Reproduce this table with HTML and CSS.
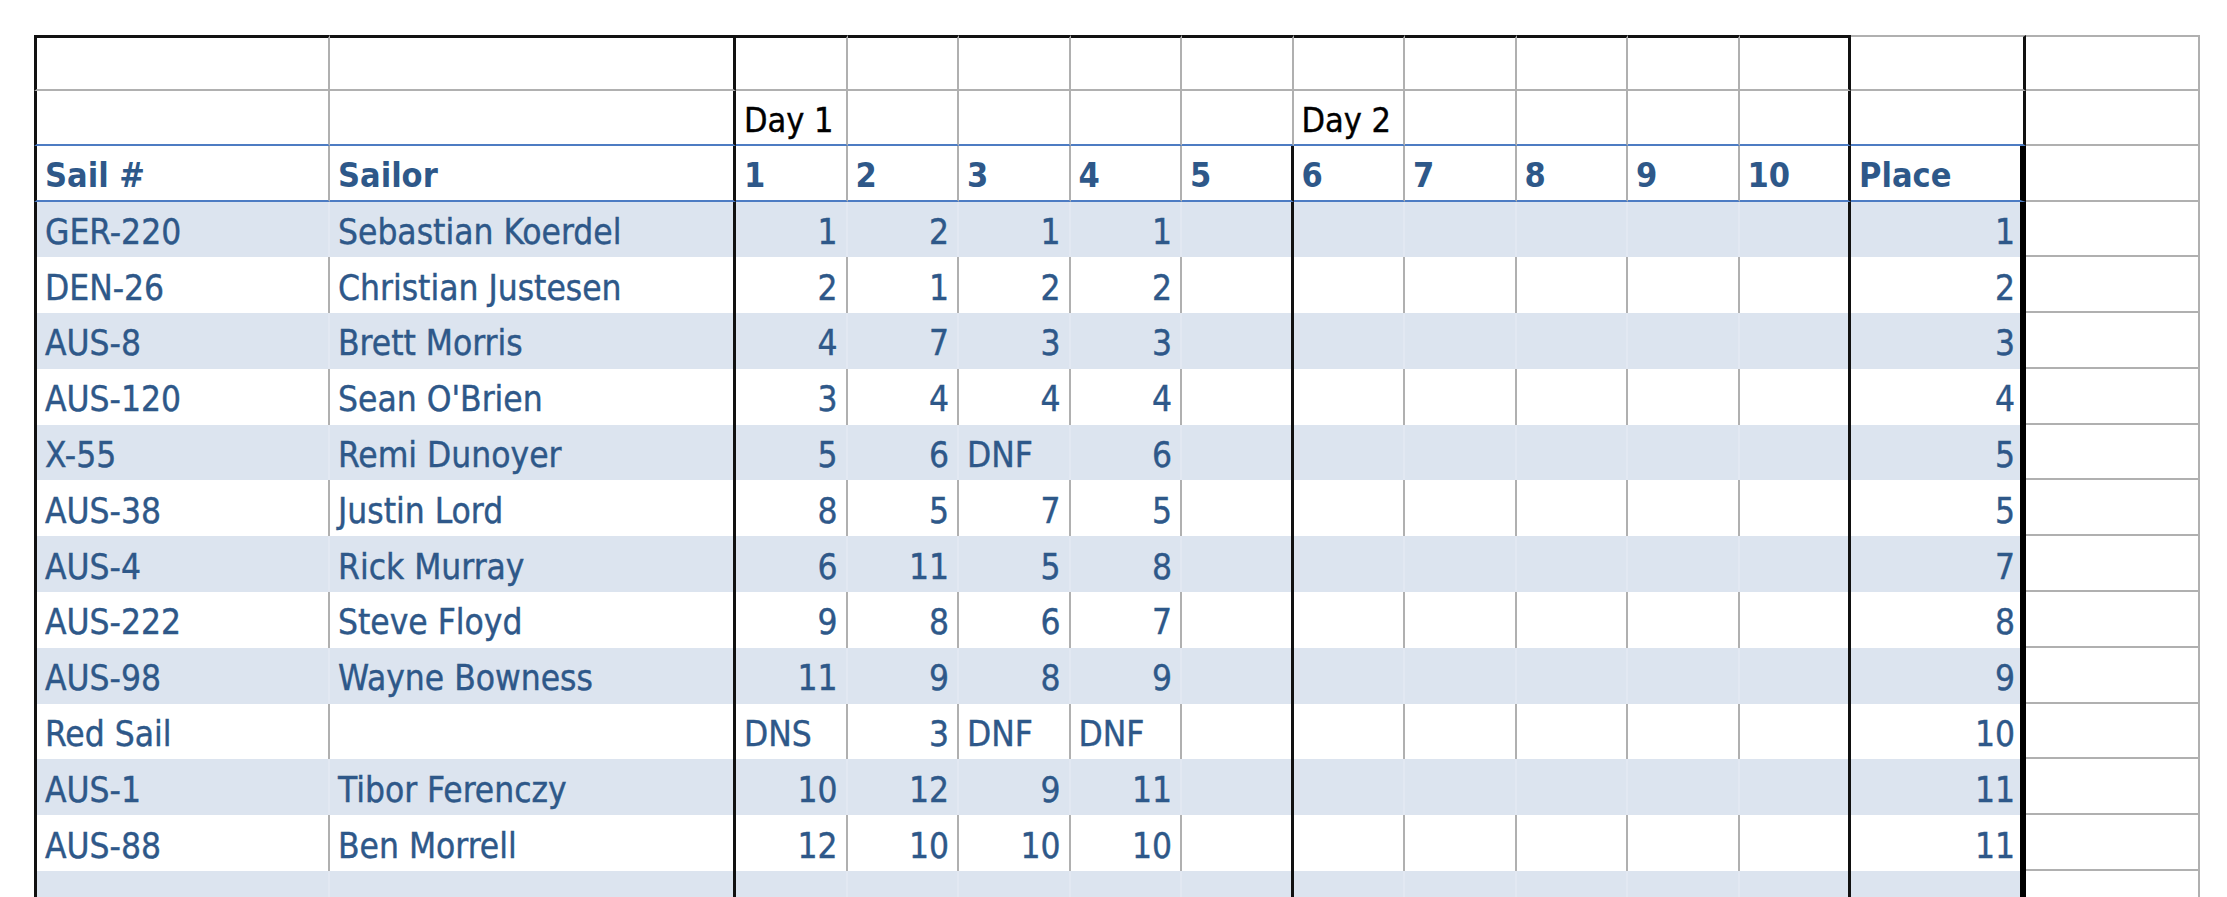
FILE: index.html
```html
<!DOCTYPE html>
<html>
<head>
<meta charset="utf-8">
<title>Results</title>
<link rel="stylesheet" href="styles.css">
</head>
<body>
<div class="sheet">
  <div class="row top head">
    <div class="c"></div><div class="c"></div><div class="c"></div><div class="c"></div><div class="c"></div><div class="c"></div><div class="c"></div><div class="c"></div><div class="c"></div><div class="c"></div><div class="c"></div><div class="c"></div><div class="c"></div><div class="c"></div>
  </div>
  <div class="row head head2">
    <div class="c"></div><div class="c"></div><div class="c day">Day 1</div><div class="c"></div><div class="c"></div><div class="c"></div><div class="c"></div><div class="c day">Day 2</div><div class="c"></div><div class="c"></div><div class="c"></div><div class="c"></div><div class="c"></div><div class="c"></div>
  </div>
  <div class="row cols">
    <div class="c">Sail #</div><div class="c">Sailor</div><div class="c">1</div><div class="c">2</div><div class="c">3</div><div class="c">4</div><div class="c">5</div><div class="c">6</div><div class="c">7</div><div class="c">8</div><div class="c">9</div><div class="c">10</div><div class="c">Place</div><div class="c"></div>
  </div>
  <div class="row data band">
    <div class="c">GER-220</div><div class="c">Sebastian Koerdel</div><div class="c num">1</div><div class="c num">2</div><div class="c num">1</div><div class="c num">1</div><div class="c"></div><div class="c"></div><div class="c"></div><div class="c"></div><div class="c"></div><div class="c"></div><div class="c num place">1</div><div class="c"></div>
  </div>
  <div class="row data">
    <div class="c">DEN-26</div><div class="c">Christian Justesen</div><div class="c num">2</div><div class="c num">1</div><div class="c num">2</div><div class="c num">2</div><div class="c"></div><div class="c"></div><div class="c"></div><div class="c"></div><div class="c"></div><div class="c"></div><div class="c num place">2</div><div class="c"></div>
  </div>
  <div class="row data band">
    <div class="c">AUS-8</div><div class="c">Brett Morris</div><div class="c num">4</div><div class="c num">7</div><div class="c num">3</div><div class="c num">3</div><div class="c"></div><div class="c"></div><div class="c"></div><div class="c"></div><div class="c"></div><div class="c"></div><div class="c num place">3</div><div class="c"></div>
  </div>
  <div class="row data">
    <div class="c">AUS-120</div><div class="c">Sean O'Brien</div><div class="c num">3</div><div class="c num">4</div><div class="c num">4</div><div class="c num">4</div><div class="c"></div><div class="c"></div><div class="c"></div><div class="c"></div><div class="c"></div><div class="c"></div><div class="c num place">4</div><div class="c"></div>
  </div>
  <div class="row data band">
    <div class="c">X-55</div><div class="c">Remi Dunoyer</div><div class="c num">5</div><div class="c num">6</div><div class="c">DNF</div><div class="c num">6</div><div class="c"></div><div class="c"></div><div class="c"></div><div class="c"></div><div class="c"></div><div class="c"></div><div class="c num place">5</div><div class="c"></div>
  </div>
  <div class="row data">
    <div class="c">AUS-38</div><div class="c">Justin Lord</div><div class="c num">8</div><div class="c num">5</div><div class="c num">7</div><div class="c num">5</div><div class="c"></div><div class="c"></div><div class="c"></div><div class="c"></div><div class="c"></div><div class="c"></div><div class="c num place">5</div><div class="c"></div>
  </div>
  <div class="row data band">
    <div class="c">AUS-4</div><div class="c">Rick Murray</div><div class="c num">6</div><div class="c num">11</div><div class="c num">5</div><div class="c num">8</div><div class="c"></div><div class="c"></div><div class="c"></div><div class="c"></div><div class="c"></div><div class="c"></div><div class="c num place">7</div><div class="c"></div>
  </div>
  <div class="row data">
    <div class="c">AUS-222</div><div class="c">Steve Floyd</div><div class="c num">9</div><div class="c num">8</div><div class="c num">6</div><div class="c num">7</div><div class="c"></div><div class="c"></div><div class="c"></div><div class="c"></div><div class="c"></div><div class="c"></div><div class="c num place">8</div><div class="c"></div>
  </div>
  <div class="row data band">
    <div class="c">AUS-98</div><div class="c">Wayne Bowness</div><div class="c num">11</div><div class="c num">9</div><div class="c num">8</div><div class="c num">9</div><div class="c"></div><div class="c"></div><div class="c"></div><div class="c"></div><div class="c"></div><div class="c"></div><div class="c num place">9</div><div class="c"></div>
  </div>
  <div class="row data">
    <div class="c">Red Sail</div><div class="c"></div><div class="c">DNS</div><div class="c num">3</div><div class="c">DNF</div><div class="c">DNF</div><div class="c"></div><div class="c"></div><div class="c"></div><div class="c"></div><div class="c"></div><div class="c"></div><div class="c num place">10</div><div class="c"></div>
  </div>
  <div class="row data band">
    <div class="c">AUS-1</div><div class="c">Tibor Ferenczy</div><div class="c num">10</div><div class="c num">12</div><div class="c num">9</div><div class="c num">11</div><div class="c"></div><div class="c"></div><div class="c"></div><div class="c"></div><div class="c"></div><div class="c"></div><div class="c num place">11</div><div class="c"></div>
  </div>
  <div class="row data">
    <div class="c">AUS-88</div><div class="c">Ben Morrell</div><div class="c num">12</div><div class="c num">10</div><div class="c num">10</div><div class="c num">10</div><div class="c"></div><div class="c"></div><div class="c"></div><div class="c"></div><div class="c"></div><div class="c"></div><div class="c num place">11</div><div class="c"></div>
  </div>
  <div class="row data band">
    <div class="c"></div><div class="c"></div><div class="c"></div><div class="c"></div><div class="c"></div><div class="c"></div><div class="c"></div><div class="c"></div><div class="c"></div><div class="c"></div><div class="c"></div><div class="c"></div><div class="c"></div><div class="c"></div>
  </div>
</div>
</body>
</html>
```

FILE: styles.css
```css
html, body {
  margin: 0;
  padding: 0;
  background: #fff;
}

.sheet {
  display: grid;
  grid-template-columns: 296px 406px repeat(10, 111.5px) 175px 174px;
  grid-template-rows: 55.5px 55.5px 55.5px;
  grid-auto-rows: 55.8px;
  width: max-content;
  margin: 35px 0 0 34px;
  font-family: "DejaVu Sans Condensed", "DejaVu Sans", sans-serif;
  font-size: 35px;
  color: #2e5889;
  -webkit-text-stroke: 0.4px currentColor;
}

.row {
  display: contents;
}

.c {
  box-sizing: border-box;
  display: flex;
  align-items: center;
  padding: 5px 8px 0;
  white-space: nowrap;
  overflow: hidden;
  background: #fff;
  border-right: 2px solid #b0b0b0;
}

.c:first-child {
  border-left: 3px solid #111;
}

.c:nth-child(2),
.c:nth-child(12),
.c:nth-child(13) {
  border-right: 3px solid #111;
}

.top .c {
  border-top: 3px solid #111;
}

.top .c:nth-child(13),
.top .c:nth-child(14) {
  border-top: 2px solid #b0b0b0;
}

.head .c {
  border-bottom: 2px solid #b0b0b0;
}

.head2 .c,
.cols .c {
  border-bottom: 2px solid #4d7cc3;
}

.head2 .c:last-child,
.cols .c:last-child {
  border-bottom-color: #b0b0b0;
}

.cols .c {
  font-weight: bold;
  font-size: 34px;
  -webkit-text-stroke: 0;
}

.cols .c:nth-child(7),
.data .c:nth-child(7) {
  border-right: 3px solid #111;
}

.cols .c:nth-child(13),
.data .c:nth-child(13) {
  border-right: 6px solid #000;
}

.data .c:last-child {
  border-bottom: 2px solid #b0b0b0;
}

.day {
  color: #000;
  font-size: 34px;
}

.num {
  justify-content: flex-end;
}

.place {
  padding-right: 5px;
}

.band .c {
  background: #dce4ef;
}

.band .c:last-child {
  background: #fff;
}

.band .c:nth-child(1),
.band .c:nth-child(3),
.band .c:nth-child(4),
.band .c:nth-child(5),
.band .c:nth-child(6),
.band .c:nth-child(8),
.band .c:nth-child(9),
.band .c:nth-child(10),
.band .c:nth-child(11) {
  border-right-color: #e2e8f2;
}
```
